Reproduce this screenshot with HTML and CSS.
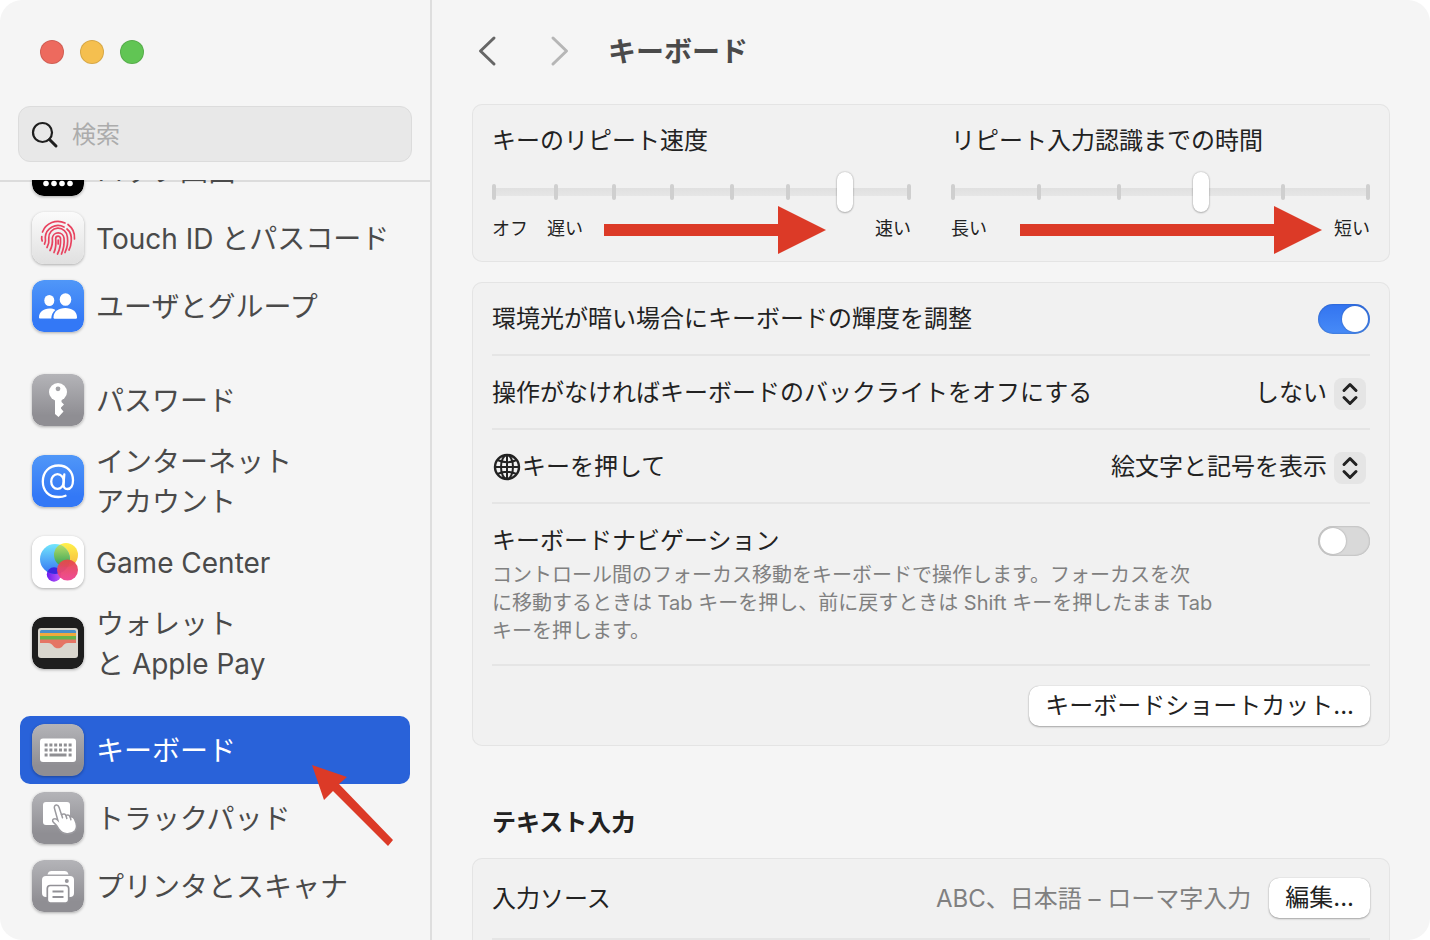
FILE: index.html
```html
<!DOCTYPE html>
<html lang="ja">
<head>
  <meta charset="UTF-8" />
  <title>キーボード</title>
  <link rel="stylesheet" href="styles.css">
</head>
<body>
  <div class="window">
    <aside class="sidebar">
      <div class="lights">
        <button class="light red" aria-label="閉じる"></button>
        <button class="light yellow" aria-label="しまう"></button>
        <button class="light green" aria-label="拡大"></button>
      </div>

      <label class="search">
        <svg width="28" height="28" viewBox="0 0 28 28" fill="none" stroke="#1f1f1f" stroke-linecap="round">
          <circle cx="11.5" cy="11.5" r="9.5" stroke-width="2.2" />
          <path d="M18.5 18.5L25 25" stroke-width="3" />
        </svg>
        <input type="text" placeholder="検索" aria-label="検索">
      </label>

      <nav class="list">
        <a class="item" href="#">
          <svg class="icon" viewBox="0 0 52 52">
            <rect width="52" height="52" rx="12" fill="#000" />
            <g fill="#fff">
              <circle cx="14" cy="39.500" r="2.800" /><circle cx="22" cy="39.500" r="2.800" />
              <circle cx="30" cy="39.500" r="2.800" /><circle cx="38" cy="39.500" r="2.800" />
              <rect x="14" y="12" width="24" height="4" rx="2" />
            </g>
          </svg>
          <span>ロック画面</span>
        </a>
        <a class="item" href="#">
          <svg class="icon" viewBox="0 0 52 52">
            <defs>
              <linearGradient id="light" x1="0" y1="0" x2="0" y2="1"><stop offset="0" stop-color="#fbfbfb" /><stop offset="1" stop-color="#e0e0e0" /></linearGradient>
              <linearGradient id="blue" x1="0" y1="0" x2="0" y2="1"><stop offset="0" stop-color="#5097f8" /><stop offset=".8" stop-color="#3378f6" /></linearGradient>
              <linearGradient id="gray" x1="0" y1="0" x2="0" y2="1"><stop offset="0" stop-color="#b4b4b8" /><stop offset=".8" stop-color="#8f8e93" /></linearGradient>
            </defs>
            <rect width="52" height="52" rx="12" fill="url(#light)" />
            <g fill="none" stroke="#e8435f" stroke-width="1.7" stroke-linecap="round">
              <path d="M10.500 20A16.500 16.500 0 0 1 33 11" />
              <path d="M36 12.500A16.500 16.500 0 0 1 42.500 27" />
              <path d="M9.800 24.500q-.4 2 .4 4.500" />
              <path d="M12.500 32Q14 29 13.300 25A12.800 12.800 0 0 1 32 15" />
              <path d="M35 17Q40 21 39.300 29Q39 34 37 38" />
              <path d="M15 35.500Q17.500 31 16.800 26A9.300 9.300 0 0 1 35.400 25Q36.500 33 33 40.500" />
              <path d="M18 38.500Q21 33 20.300 26A5.900 5.900 0 0 1 32 26Q32.800 34 29.500 42" />
              <path d="M22 40.500Q24.500 35 23.700 26.500A2.400 2.400 0 0 1 28.500 26.500Q29 35 25.500 42" />
              <path d="M26.200 28v4" />
            </g>
          </svg>
          <span>Touch ID とパスコード</span>
        </a>
        <a class="item" href="#">
          <svg class="icon" viewBox="0 0 52 52">
            <rect width="52" height="52" rx="12" fill="url(#blue)" />
            <g fill="#fff">
              <ellipse cx="17.300" cy="20.500" rx="5" ry="5.600" />
              <ellipse cx="33.500" cy="19.500" rx="5.800" ry="6.300" />
              <path d="M7 37.500C7 32 11.500 28.500 17.300 28.500c2.500 0 4.500.5 6 1.400-2.600 2-3.900 5-4 8.600H8q-1 0-1-1z" />
              <path d="M21.500 37.500C21.500 31.500 26.500 28 33.300 28S45 31.500 45 37.500q0 1.200-1.200 1.200H22.700q-1.200 0-1.200-1.200z" />
            </g>
          </svg>
          <span>ユーザとグループ</span>
        </a>
        <a class="item group" href="#">
          <svg class="icon" viewBox="0 0 52 52">
            <rect width="52" height="52" rx="12" fill="url(#gray)" />
            <circle cx="26" cy="18" r="9" fill="#fff" />
            <path d="M23 25h6.500v3l2.500 2.500-3 3v1l2.500 3-5 5.500-3.500-3z" fill="#fff" />
            <circle cx="26" cy="14.800" r="2.400" fill="#a2a2a6" />
          </svg>
          <span>パスワード</span>
        </a>
        <a class="item tall" href="#">
          <svg class="icon" viewBox="0 0 52 52">
            <rect width="52" height="52" rx="12" fill="url(#blue)" />
            <g fill="none" stroke="#fff" stroke-width="2.300" stroke-linecap="round">
              <ellipse cx="25.500" cy="26.500" rx="6.300" ry="7.300" />
              <path d="M32.300 19.500L31.500 29c-.2 3 1 5 3.800 5 3.700 0 5.700-3.700 5.700-8.700C41 16.500 35 10.500 26.500 10.500 17 10.500 10.800 17 10.800 26.500c0 9.500 6 15.500 15.500 15.500 2.900 0 5.200-.4 7.200-1.300" />
            </g>
          </svg>
          <span>インターネット<br>アカウント</span>
        </a>
        <a class="item" href="#">
          <svg class="icon" viewBox="0 0 52 52">
            <defs>
              <linearGradient id="sky" x1="0" y1="0" x2="0" y2="1"><stop offset="0" stop-color="#72e6fc" /><stop offset="1" stop-color="#3574f2" /></linearGradient>
              <linearGradient id="sun" x1="0" y1="0" x2="0" y2="1"><stop offset="0" stop-color="#fff14b" /><stop offset="1" stop-color="#f6b83f" /></linearGradient>
              <linearGradient id="leaf" x1="0" y1="0" x2="0" y2="1"><stop offset="0" stop-color="#c2e36a" /><stop offset="1" stop-color="#2e9f56" /></linearGradient>
              <linearGradient id="rose" x1="0" y1="0" x2="0" y2="1"><stop offset="0" stop-color="#e54845" /><stop offset="1" stop-color="#ee4293" /></linearGradient>
              <linearGradient id="plum" x1="0" y1="0" x2="1" y2="0"><stop offset="0" stop-color="#6d1cf0" /><stop offset="1" stop-color="#c25cf5" /></linearGradient>
              <clipPath id="ball"><circle cx="23" cy="23" r="15" /></clipPath>
            </defs>
            <rect width="52" height="52" rx="12" fill="#fff" />
            <circle cx="22" cy="38.500" r="7.200" fill="url(#plum)" />
            <circle cx="34" cy="19" r="12" fill="url(#sun)" />
            <circle cx="23" cy="23" r="15" fill="url(#sky)" />
            <circle cx="34" cy="19" r="12" fill="url(#leaf)" clip-path="url(#ball)" />
            <circle cx="22" cy="38.500" r="7.200" fill="#3b25df" clip-path="url(#ball)" />
            <circle cx="35.500" cy="34" r="10.500" fill="url(#rose)" fill-opacity=".95" />
          </svg>
          <span>Game Center</span>
        </a>
        <a class="item tall" href="#">
          <svg class="icon" viewBox="0 0 52 52">
            <rect width="52" height="52" rx="12" fill="#1e1e1e" />
            <rect x="6" y="11" width="40" height="30" rx="3" fill="#d9d6ce" />
            <path d="M8 17v-2.500q0-1.500 1.500-1.500h33q1.500 0 1.500 1.500V17z" fill="#4a8fc8" />
            <path d="M8 16h36v4H8z" fill="#f0a93c" />
            <path d="M8 19h36v4H8z" fill="#65b54c" />
            <path d="M8 22.500h36V26h-8c-3 0-4 1.500-5.500 3.200-1.300 1.400-2.500 2-4.500 2s-3.200-.6-4.500-2C20 27.500 19 26 16 26H8z" fill="#e57565" />
          </svg>
          <span>ウォレット<br>と Apple Pay</span>
        </a>
        <a class="item group selected" href="#">
          <svg class="icon" viewBox="0 0 52 52">
            <rect width="52" height="52" rx="12" fill="url(#gray)" />
            <rect x="8" y="14.500" width="36" height="23.500" rx="3" fill="#fff" />
            <g fill="none" stroke="#8f8f93" stroke-width="3">
              <path d="M12.600 21h28M12.600 26h28" stroke-dasharray="3 1.800" />
              <path d="M12.600 31h3M17.500 31h17M36.600 31h3" />
            </g>
          </svg>
          <span>キーボード</span>
          <svg class="pointer" width="84" height="84" viewBox="0 0 84 84" fill="#dc3a27">
            <path d="M1 1L36 13L28 20L82 76L77 82L22 27L13 36z" />
          </svg>
        </a>
        <a class="item" href="#">
          <svg class="icon" viewBox="0 0 52 52">
            <rect width="52" height="52" rx="12" fill="url(#gray)" />
            <rect x="11" y="10" width="27" height="23" rx="3" fill="#fff" />
            <path d="M22.500 16.500c-.6-2 .3-3.300 1.700-3.500 1.400-.2 2.300.6 2.800 2.200l2.500 7.500c2-1.200 3.600-.8 4.400.8 2-.9 3.400-.3 4.200 1.300 2-.5 3.500.2 4.300 2.200 2.100 4.300 3.300 8.500.6 11.700-4 4.500-12.500 4-15.800-1.200-1.500-2.800-3.200-5.200-5.700-7.200-1.600-1.300-1-3.500 1.200-3.600 1-.1 2 .4 3.100 1.500z" fill="#fff" stroke="#9b9a9f" stroke-width="1.500" />
            <path d="M29.500 22.500l1 3.200M34 23.500l.8 3M38.200 25l.7 2.700" stroke="#9b9a9f" stroke-width="1.500" stroke-linecap="round" />
          </svg>
          <span>トラックパッド</span>
        </a>
        <a class="item" href="#">
          <svg class="icon" viewBox="0 0 52 52">
            <rect width="52" height="52" rx="12" fill="url(#gray)" />
            <path d="M15.500 14.500C16 12 17.500 11 19.500 11h13c2 0 3.500 1 4 3.500z" fill="#fff" />
            <rect x="10" y="16" width="32" height="21" rx="4" fill="#fff" />
            <circle cx="34.800" cy="21" r="2" fill="#97969b" />
            <rect x="15.300" y="25.500" width="21.400" height="17.500" rx="3" fill="#fff" stroke="#929196" stroke-width="1.700" />
            <path d="M20.500 31.500h11M20.500 37h11" stroke="#929196" stroke-width="2" />
          </svg>
          <span>プリンタとスキャナ</span>
        </a>
      </nav>
    </aside>

    <main class="content">
      <header class="toolbar">
        <button class="nav-btn" aria-label="戻る">
          <svg width="20" height="32" viewBox="0 0 20 32"><path d="M17 3L3.500 16L17 29" /></svg>
        </button>
        <button class="nav-btn forward" aria-label="進む">
          <svg width="20" height="32" viewBox="0 0 20 32"><path d="M3 3L16.500 16L3 29" /></svg>
        </button>
        <h1>キーボード</h1>
      </header>

      <section class="card sliders">
        <div class="slider">
          <label for="repeat">キーのリピート速度</label>
          <div class="track">
            <svg class="ticks" viewBox="0 0 419 16" preserveAspectRatio="none" fill="#cfcfcf">
              <rect x="0" width="4" height="16" rx="2" /><rect x="62" width="4" height="16" rx="2" />
              <rect x="120" width="4" height="16" rx="2" /><rect x="178" width="4" height="16" rx="2" />
              <rect x="238" width="4" height="16" rx="2" /><rect x="294" width="4" height="16" rx="2" />
              <rect x="415" width="4" height="16" rx="2" />
            </svg>
            <input type="range" id="repeat" min="0" max="1000" value="856">
          </div>
          <div class="ends"><span>オフ</span><span>遅い</span><span class="last">速い</span></div>
          <svg class="arrow arrow-repeat" width="222" height="48" viewBox="0 0 222 48" fill="#dc3a27">
            <path d="M0 18H174V0L222 24L174 48V30H0z" />
          </svg>
        </div>
        <div class="slider">
          <label for="delay">リピート入力認識までの時間</label>
          <div class="track">
            <svg class="ticks" viewBox="0 0 419 16" preserveAspectRatio="none" fill="#cfcfcf">
              <rect x="0" width="4" height="16" rx="2" /><rect x="86" width="4" height="16" rx="2" />
              <rect x="166" width="4" height="16" rx="2" /><rect x="330" width="4" height="16" rx="2" />
              <rect x="415" width="4" height="16" rx="2" />
            </svg>
            <input type="range" id="delay" min="0" max="1000" value="600">
          </div>
          <div class="ends"><span>長い</span><span class="last">短い</span></div>
          <svg class="arrow arrow-delay" width="302" height="48" viewBox="0 0 302 48" fill="#dc3a27">
            <path d="M0 18H254V0L302 24L254 48V30H0z" />
          </svg>
        </div>
      </section>

      <section class="card">
        <div class="row">
          <label for="ambient">環境光が暗い場合にキーボードの輝度を調整</label>
          <input type="checkbox" class="switch" id="ambient" checked>
        </div>
        <div class="row">
          <label for="backlight">操作がなければキーボードのバックライトをオフにする</label>
          <div class="popup">
            <select id="backlight"><option>しない</option></select>
            <svg width="32" height="32" viewBox="0 0 32 32"><path d="M10 12.500L16 6.500L22 12.500M10 19.500L16 25.500L22 19.500" /></svg>
          </div>
        </div>
        <div class="row">
          <label for="globe" class="globe-label">
            <svg width="30" height="30" viewBox="0 0 30 30" fill="none" stroke="#222" stroke-width="2">
              <circle cx="15" cy="15" r="12" stroke-width="2.400" />
              <ellipse cx="15" cy="15" rx="6" ry="12" />
              <path d="M15 3v24M3 15h24M5.500 8Q15 12.500 24.500 8M5.500 22Q15 17.500 24.500 22" />
            </svg>キーを押して</label>
          <div class="popup">
            <select id="globe"><option>絵文字と記号を表示</option></select>
            <svg width="32" height="32" viewBox="0 0 32 32"><path d="M10 12.500L16 6.500L22 12.500M10 19.500L16 25.500L22 19.500" /></svg>
          </div>
        </div>
        <div class="row row-top">
          <div>
            <label for="navigation">キーボードナビゲーション</label>
            <p class="note">コントロール間のフォーカス移動をキーボードで操作します。フォーカスを次<br>に移動するときは Tab キーを押し、前に戻すときは Shift キーを押したまま Tab<br>キーを押します。</p>
          </div>
          <input type="checkbox" class="switch" id="navigation">
        </div>
        <div class="row row-buttons">
          <button class="btn">キーボードショートカット...</button>
        </div>
      </section>

      <h2>テキスト入力</h2>

      <section class="card card-cut">
        <div class="row row-input">
          <span>入力ソース</span>
          <span class="value">ABC、日本語 – ローマ字入力</span>
          <button class="btn">編集...</button>
        </div>
      </section>
    </main>
  </div>
</body>
</html>
```
FILE: styles.css
```css
* {
  box-sizing: border-box;
}
body {
  margin: 0;
  background: #fff;
  color: #222;
  font-family: Inter, "Noto Sans CJK JP", sans-serif;
  font-size: 24px;
  line-height: 36px;
}
button,
input,
select {
  font: inherit;
  color: inherit;
  margin: 0;
}
svg {
  flex: none;
}
.window {
  display: flex;
  height: 100vh;
  background: #f5f5f5;
  border-radius: 22px;
  overflow: hidden;
}

/* sidebar */
.sidebar {
  display: flex;
  flex-direction: column;
  flex: none;
  width: 432px;
  border-right: 2px solid #dedede;
}
.lights {
  display: flex;
  gap: 16px;
  padding: 40px 40px 0;
}
.light {
  width: 24px;
  height: 24px;
  padding: 0;
  border: 1px solid rgba(0, 0, 0, 0.12);
  border-radius: 50%;
}
.red {
  background: #ed6a5e;
}
.yellow {
  background: #f5bf4f;
}
.green {
  background: #61c554;
}
.search {
  display: flex;
  align-items: center;
  gap: 13px;
  height: 56px;
  margin: 42px 18px 18px;
  padding: 2px 12px 0;
  background: #e8e8e8;
  border: 1px solid #dcdcdc;
  border-radius: 12px;
}
.search input {
  flex: 1;
  min-width: 0;
  padding: 0;
  border: none;
  outline: none;
  background: none;
}
.search input::placeholder {
  color: #acacac;
}
.list {
  flex: 1;
  min-height: 0;
  overflow: hidden;
  padding: 0 20px;
  background: linear-gradient(#dcdcdc, #dcdcdc) top / 100% 2px no-repeat;
}
/* the list is scrolled, its first row is partly hidden */
.item:first-child {
  margin-top: -44px;
}
.item {
  position: relative;
  display: flex;
  align-items: center;
  gap: 12px;
  height: 68px;
  padding: 0 12px;
  border-radius: 10px;
  color: #4a4a4a;
  font-size: 28px;
  line-height: 40px;
  text-decoration: none;
  white-space: nowrap;
}
.item span {
  padding-top: 2px;
}
.tall {
  height: 94px;
}
.group {
  margin-top: 26px;
}
.selected {
  background: #2962d9;
  color: #fff;
}
.icon {
  width: 52px;
  height: 52px;
  border-radius: 12px;
  box-shadow: 0 1px 3px rgba(0, 0, 0, 0.3);
}
.pointer {
  position: absolute;
  left: 291px;
  top: 48px;
  z-index: 1;
}

/* main pane */
.content {
  flex: 1;
  min-width: 0;
  padding: 0 40px;
  overflow: hidden;
}
.toolbar {
  display: flex;
  align-items: center;
  height: 104px;
  padding-bottom: 2px;
}
.nav-btn {
  display: flex;
  padding: 0 5px;
  margin-right: 43px;
  border: none;
  background: none;
}
.nav-btn path {
  fill: none;
  stroke: #666;
  stroke-width: 3;
  stroke-linecap: round;
  stroke-linejoin: round;
}
.forward {
  margin-right: 33px;
}
.forward path {
  stroke: #b6b6b6;
}
h1 {
  margin: 0;
  padding-top: 2px;
  color: #4a4a4a;
  font-size: 28px;
  line-height: 40px;
}
h2 {
  margin: 0;
  padding: 39px 20px 17px;
  font-size: 24px;
  line-height: 36px;
}
.card {
  margin-bottom: 20px;
  padding: 0 20px;
  background: #f1f1f1;
  border-radius: 10px;
  box-shadow: inset 0 0 0 1px #e4e4e4;
}
.card-cut {
  padding-bottom: 60px;
}

.sliders {
  display: grid;
  grid-template-columns: 1fr 1fr;
  gap: 40px;
  padding: 19px 20px;
}
.slider {
  position: relative;
}
.slider label {
  display: block;
}
.track {
  display: grid;
  align-items: center;
  height: 44px;
  margin: 11px 0 1px;
}
.ticks,
.track input {
  grid-area: 1 / 1;
  width: 100%;
}
.ticks {
  height: 16px;
  z-index: 1;
  pointer-events: none;
}
.track input {
  appearance: none;
  height: 40px;
  background: linear-gradient(#e0e0e0, #e6e6e6) center / 100% 8px no-repeat;
}
.track input::-webkit-slider-thumb {
  appearance: none;
  width: 16px;
  height: 40px;
  background: #fff;
  border-radius: 8px;
  box-shadow: 0 0 2px rgba(0, 0, 0, 0.3), 0 1px 2px rgba(0, 0, 0, 0.2);
}
.ends {
  display: flex;
  gap: 19px;
  font-size: 18px;
  line-height: 28px;
}
.last {
  margin-left: auto;
}
.arrow {
  position: absolute;
  top: 83px;
  z-index: 2;
}
.arrow-repeat {
  left: 112px;
}
.arrow-delay {
  left: 69px;
}

.row {
  display: flex;
  align-items: center;
  justify-content: space-between;
  height: 74px;
  padding-top: 2px;
  border-bottom: 2px solid #e5e5e5;
}
.row-top {
  align-items: flex-start;
  height: auto;
  padding: 19px 0;
}
.row-top .switch {
  margin-top: 3px;
}
.row-top label {
  display: block;
}
.row-buttons {
  justify-content: flex-end;
  height: 80px;
  padding-top: 0;
  border: none;
}
.row-input {
  height: 82px;
  padding-top: 0;
}
.row-input span {
  padding-top: 2px;
}
.note {
  margin: 2px 0 0;
  color: #808080;
  font-size: 20px;
  line-height: 28px;
}
.value {
  margin-left: auto;
  margin-right: 18px;
  color: #808080;
}
.globe-label {
  display: flex;
  align-items: center;
}
.switch {
  appearance: none;
  flex: none;
  width: 52px;
  height: 30px;
  padding: 2px;
  border-radius: 15px;
  background: #d9d9d9;
  box-shadow: inset 0 0 2px rgba(0, 0, 0, 0.3);
}
.switch::before {
  content: "";
  display: block;
  width: 26px;
  height: 26px;
  border-radius: 50%;
  background: #fff;
  box-shadow: 0 0 2px rgba(0, 0, 0, 0.3);
}
.switch:checked {
  background: linear-gradient(#3374f0, #478bf7);
}
.switch:checked::before {
  margin-left: auto;
}
.popup {
  position: relative;
  margin-right: 4px;
}
.popup select {
  appearance: none;
  display: block;
  height: 36px;
  padding: 0 39px 0 0;
  border: none;
  background: none;
}
.popup svg {
  position: absolute;
  right: 0;
  top: 3px;
  border-radius: 8px;
  background: #e5e5e5;
  pointer-events: none;
}
.popup path {
  fill: none;
  stroke: #222;
  stroke-width: 3;
  stroke-linecap: round;
  stroke-linejoin: round;
}
.btn {
  height: 40px;
  padding: 0 16px;
  border: none;
  border-radius: 10px;
  background: #fff;
  box-shadow: 0 0 1px rgba(0, 0, 0, 0.3), 0 1px 2px rgba(0, 0, 0, 0.3);
}
```
